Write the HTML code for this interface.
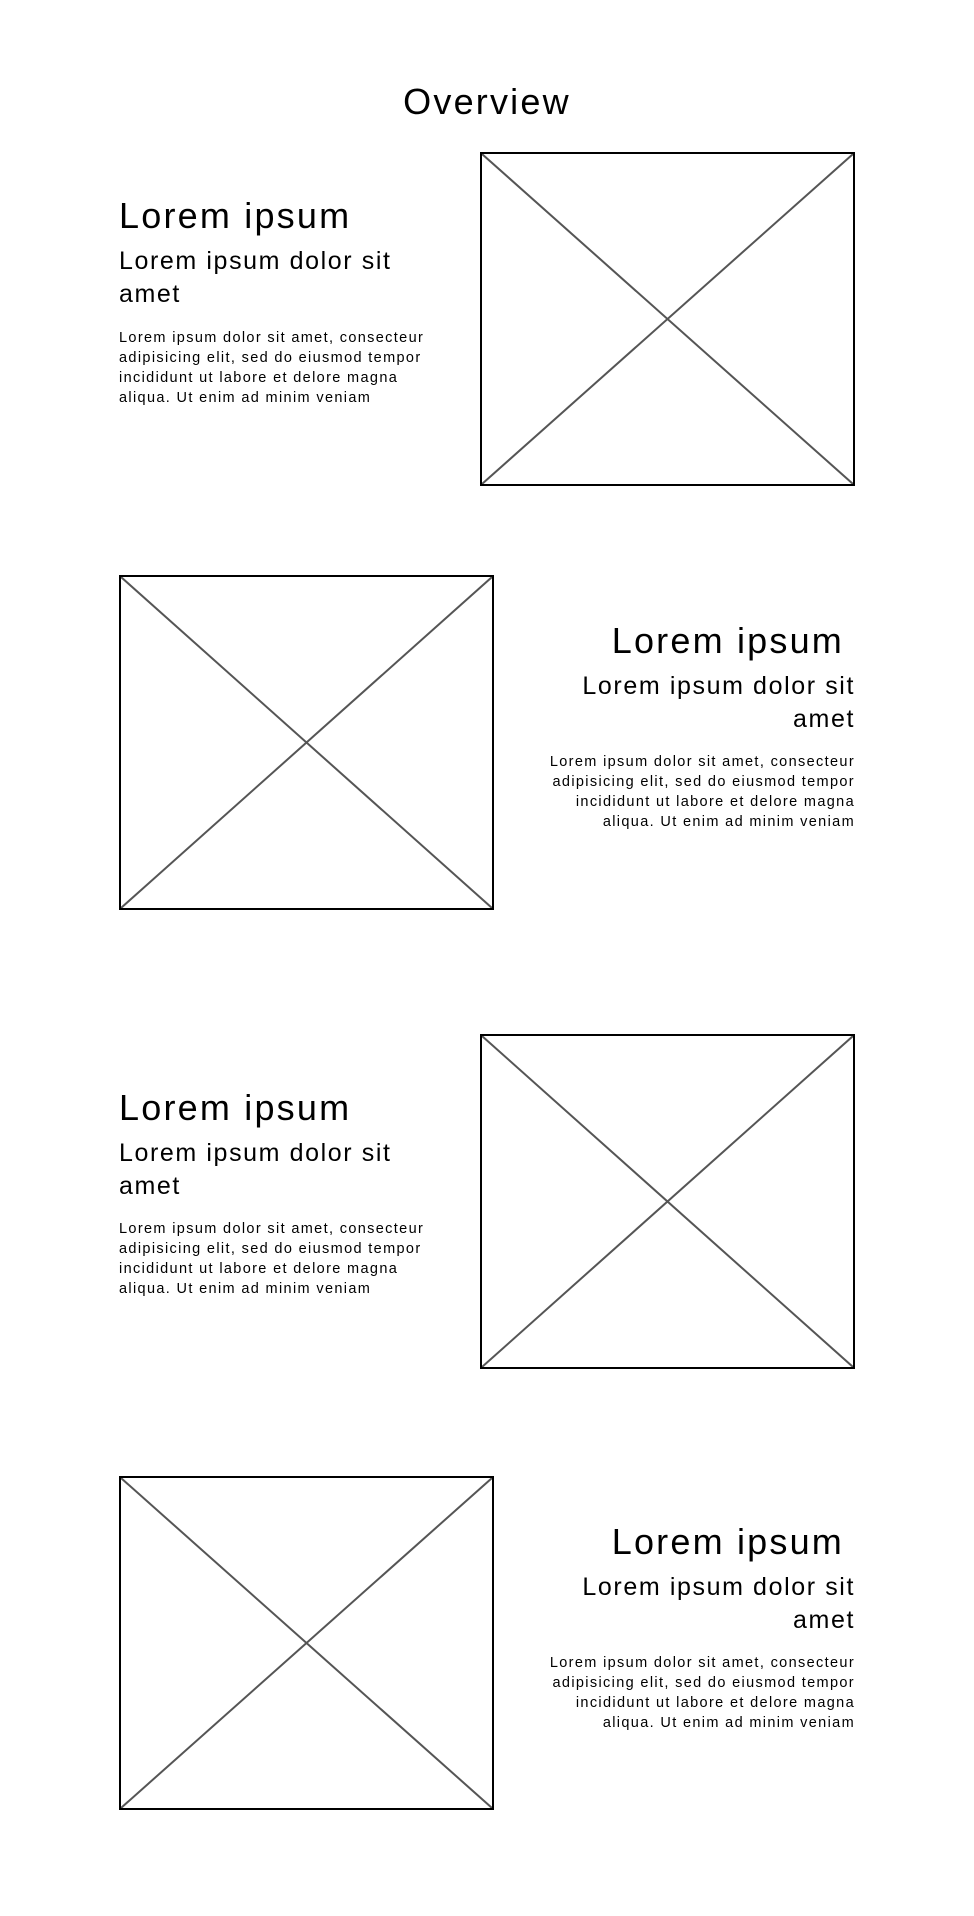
<!DOCTYPE html>
<html><head><meta charset="utf-8"><style>
html,body{margin:0;padding:0;background:#fff;}
body{width:974px;height:1916px;position:relative;overflow:hidden;font-family:"Liberation Sans",sans-serif;color:#000;}
.a{position:absolute;white-space:nowrap;}
.h1{font-size:36px;line-height:40px;letter-spacing:2.2px;}
.h2{font-size:25px;line-height:33px;letter-spacing:1.6px;}
.p{font-size:14.5px;line-height:20px;letter-spacing:1.35px;}
.r{text-align:right;}
.box{position:absolute;box-sizing:border-box;border:2px solid #000;}
.box svg{position:absolute;left:0;top:0;width:100%;height:100%;}
</style></head><body>
<div class="a" style="left:0;width:974px;text-align:center;top:82px;font-size:36px;line-height:40px;letter-spacing:2.2px;">Overview</div>

<div class="a h1" style="left:119px;top:196px;">Lorem ipsum</div>
<div class="a h2" style="left:119px;top:245px;">Lorem ipsum dolor sit<br>amet</div>
<div class="a p" style="left:119px;top:328px;">Lorem ipsum dolor sit amet, consecteur<br>adipisicing elit, sed do eiusmod tempor<br>incididunt ut labore et delore magna<br>aliqua. Ut enim ad minim veniam</div>
<div class="box" style="left:480px;top:152px;width:375px;height:334px;"><svg viewBox="0 0 371 330" preserveAspectRatio="none"><line x1="0" y1="0" x2="371" y2="330" stroke="#555" stroke-width="2"/><line x1="371" y1="0" x2="0" y2="330" stroke="#555" stroke-width="2"/></svg></div>

<div class="box" style="left:119px;top:575px;width:375px;height:335px;"><svg viewBox="0 0 371 331" preserveAspectRatio="none"><line x1="0" y1="0" x2="371" y2="331" stroke="#555" stroke-width="2"/><line x1="371" y1="0" x2="0" y2="331" stroke="#555" stroke-width="2"/></svg></div>
<div class="a h1 r" style="right:130px;top:621px;">Lorem ipsum</div>
<div class="a h2 r" style="right:119px;top:670px;">Lorem ipsum dolor sit<br>amet</div>
<div class="a p r" style="right:119px;top:752px;">Lorem ipsum dolor sit amet, consecteur<br>adipisicing elit, sed do eiusmod tempor<br>incididunt ut labore et delore magna<br>aliqua. Ut enim ad minim veniam</div>

<div class="a h1" style="left:119px;top:1088px;">Lorem ipsum</div>
<div class="a h2" style="left:119px;top:1137px;">Lorem ipsum dolor sit<br>amet</div>
<div class="a p" style="left:119px;top:1219px;">Lorem ipsum dolor sit amet, consecteur<br>adipisicing elit, sed do eiusmod tempor<br>incididunt ut labore et delore magna<br>aliqua. Ut enim ad minim veniam</div>
<div class="box" style="left:480px;top:1034px;width:375px;height:335px;"><svg viewBox="0 0 371 331" preserveAspectRatio="none"><line x1="0" y1="0" x2="371" y2="331" stroke="#555" stroke-width="2"/><line x1="371" y1="0" x2="0" y2="331" stroke="#555" stroke-width="2"/></svg></div>

<div class="box" style="left:119px;top:1476px;width:375px;height:334px;"><svg viewBox="0 0 371 330" preserveAspectRatio="none"><line x1="0" y1="0" x2="371" y2="330" stroke="#555" stroke-width="2"/><line x1="371" y1="0" x2="0" y2="330" stroke="#555" stroke-width="2"/></svg></div>
<div class="a h1 r" style="right:130px;top:1522px;">Lorem ipsum</div>
<div class="a h2 r" style="right:119px;top:1571px;">Lorem ipsum dolor sit<br>amet</div>
<div class="a p r" style="right:119px;top:1653px;">Lorem ipsum dolor sit amet, consecteur<br>adipisicing elit, sed do eiusmod tempor<br>incididunt ut labore et delore magna<br>aliqua. Ut enim ad minim veniam</div>
</body></html>
